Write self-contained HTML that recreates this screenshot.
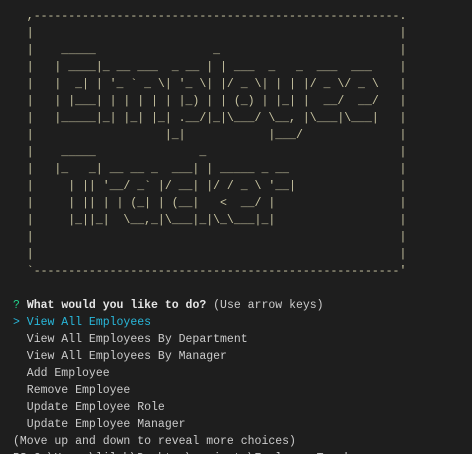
<!DOCTYPE html>
<html><head><meta charset="utf-8"><style>
html,body{margin:0;padding:0;background:#1e1e1e;width:472px;height:454px;overflow:hidden}
pre{margin:0;padding:8px 0 0 13px;font-family:"Liberation Mono",monospace;font-size:11.5px;line-height:17px;color:#cccccc;white-space:pre}
.a{color:#c9c5a2}
.g{color:#23d18b}
.b{font-weight:bold;color:#e5e5e5}
.c{color:#29b8db}
</style></head><body><pre><span class="a">  ,-----------------------------------------------------.
  |                                                     |
  |    _____                 _                          |
  |   | ____|_ __ ___  _ __ | | ___  _   _  ___  ___    |
  |   |  _| | '_ ` _ \| '_ \| |/ _ \| | | |/ _ \/ _ \   |
  |   | |___| | | | | | |_) | | (_) | |_| |  __/  __/   |
  |   |_____|_| |_| |_| .__/|_|\___/ \__, |\___|\___|   |
  |                   |_|            |___/              |
  |    _____               _                            |
  |   |_   _| __ __ _  ___| | _____ _ __                |
  |     | || '__/ _` |/ __| |/ / _ \ '__|               |
  |     | || | | (_| | (__|   &lt;  __/ |                  |
  |     |_||_|  \__,_|\___|_|\_\___|_|                  |
  |                                                     |
  |                                                     |
  `-----------------------------------------------------'</span>

<span class="g">?</span> <span class="b">What would you like to do?</span> (Use arrow keys)
<span class="c">&gt; View All Employees</span>
  View All Employees By Department
  View All Employees By Manager
  Add Employee
  Remove Employee
  Update Employee Role
  Update Employee Manager
(Move up and down to reveal more choices)
PS C:\Users\lilah\Desktop\projects\Employee-Tracker&gt;
</pre></body></html>
